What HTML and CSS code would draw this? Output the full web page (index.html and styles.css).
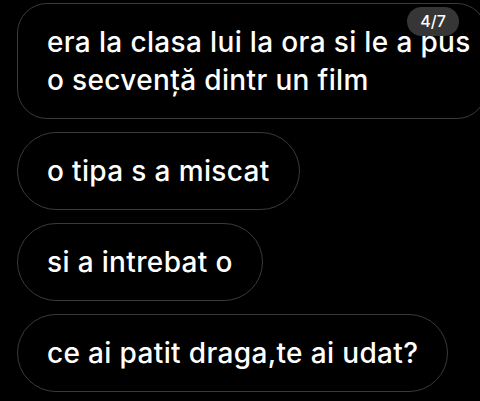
FILE: index.html
```html
<!DOCTYPE html>
<html lang="ro">
<head>
<meta charset="utf-8">
<link rel="stylesheet" href="styles.css">
</head>
<body>
<div class="thread">
  <div class="bubble bubble-wide">
    <p class="msg">era la clasa lui la ora si le a pus<br>o secvență dintr un film</p>
    <span class="badge">4/7</span>
  </div>
  <div class="bubble"><p class="msg">o tipa s a miscat</p></div>
  <div class="bubble"><p class="msg">si a intrebat o</p></div>
  <div class="bubble"><p class="msg">ce ai patit draga,te ai udat?</p></div>
</div>
</body>
</html>
```
FILE: styles.css
```css
html, body {
  margin: 0;
  background: #000;
  width: 480px;
  height: 401px;
  overflow: hidden;
}
.thread {
  display: flex;
  flex-direction: column;
  align-items: flex-start;
  gap: 13px;
  padding: 3px 0 0 17px;
}
.bubble {
  border: 1.5px solid #3a3a3a;
  border-radius: 39px;
  padding: 19px 29px;
  box-sizing: border-box;
}
.bubble-wide {
  position: relative;
  width: 470px;
  border-radius: 30px;
}
.msg {
  margin: 0;
  font-family: Inter, "Noto Sans", sans-serif;
  font-size: 28px;
  font-weight: 500;
  letter-spacing: 0.35px;
  line-height: 38px;
  color: #fff;
  white-space: nowrap;
}
.badge {
  position: absolute;
  top: 3px;
  left: 389px;
  width: 52px;
  height: 29px;
  border-radius: 15px;
  background: rgba(62, 62, 62, 0.88);
  color: #fff;
  font-family: Inter, sans-serif;
  font-size: 16px;
  font-weight: 500;
  line-height: 29px;
  text-align: center;
}
```
